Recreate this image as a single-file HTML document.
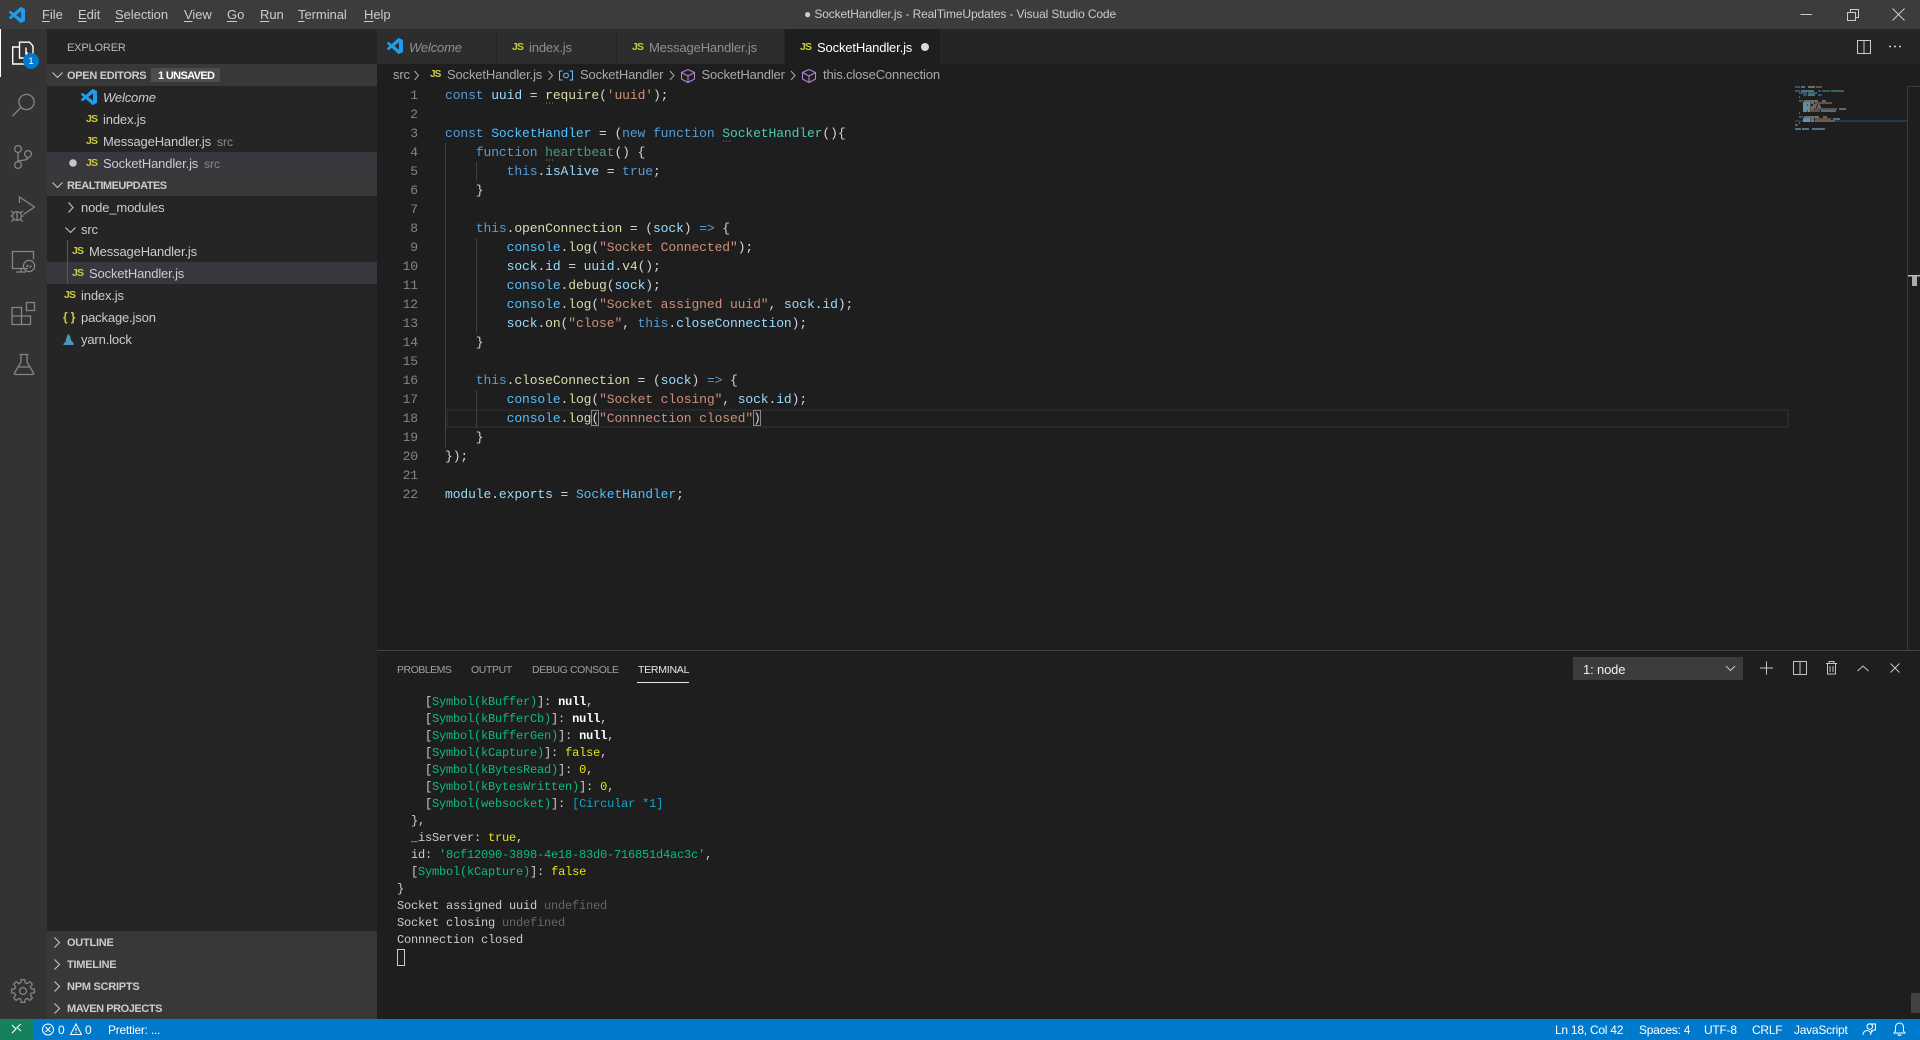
<!DOCTYPE html>
<html><head><meta charset="utf-8"><title>SocketHandler.js - RealTimeUpdates - Visual Studio Code</title>
<style>
html,body{margin:0;padding:0;background:#1e1e1e;width:1920px;height:1040px;overflow:hidden}
body{position:relative;font-family:"Liberation Sans",sans-serif;font-size:13px;color:#ccc}
.b{position:absolute}
.t{position:absolute;white-space:pre;height:22px;line-height:22px;margin-top:1px;letter-spacing:-.15px}
.j{position:absolute;white-space:pre;font:bold 10.5px/22px "Liberation Sans",sans-serif;letter-spacing:-.9px;color:#cbcb41;height:22px;margin-top:1px}
.m{position:absolute;white-space:pre;height:29px;line-height:29px;color:#ccc;letter-spacing:-.05px}
.h{position:absolute;white-space:pre;height:22px;line-height:22px;font-size:11px;font-weight:bold;color:#ccc;letter-spacing:-.25px;margin-top:1px}
.d{position:absolute;white-space:pre;height:22px;line-height:22px;margin-top:1px;color:#8b8b8b;font-size:12px}
.c{position:absolute;left:445px;height:19px;white-space:pre;font:13px/19px "Liberation Mono",monospace;letter-spacing:-.1px;color:#d4d4d4}
.n{position:absolute;left:380px;width:38px;text-align:right;height:19px;font:13px/19px "Liberation Mono",monospace;letter-spacing:-.1px;color:#858585}
.k{color:#569cd6}.v{color:#9cdcfe}.f{color:#dcdcaa}.s{color:#ce9178}.l{color:#4ec9b0}.u{color:#4f9a7c}.q{color:#4fc1ff}
.r{position:absolute;left:397px;height:17px;white-space:pre;font:12px/17px "Liberation Mono",monospace;letter-spacing:-.2px;color:#ccc;margin-top:1px}
.g{color:#0dbc79}.y{color:#e5e510}.w{color:#fff;font-weight:bold}.a{color:#11a8cd}.x{color:#666}
.p{position:absolute;white-space:pre;font-size:10.5px;height:18px;line-height:18px;color:#a0a0a0;top:661px}
.o{position:absolute;white-space:pre;font-size:12px;height:21px;line-height:21px;top:1020px;color:#fff;letter-spacing:-.25px}
svg{position:absolute;overflow:visible}
u{text-decoration:underline;text-underline-offset:2px}
</style></head><body>

<!-- regions -->
<div class="b" style="left:0;top:0;width:1920px;height:29px;background:#3c3c3c"></div>
<div class="b" style="left:0;top:29px;width:47px;height:990px;background:#333"></div>
<div class="b" style="left:0;top:29px;width:1px;height:48px;background:#fff"></div>
<div class="b" style="left:47px;top:29px;width:330px;height:990px;background:#252526"></div>
<div class="b" style="left:47px;top:64px;width:330px;height:22px;background:#383838"></div>
<div class="b" style="left:47px;top:152px;width:330px;height:22px;background:#37373d"></div>
<div class="b" style="left:47px;top:174px;width:330px;height:22px;background:#383838"></div>
<div class="b" style="left:47px;top:262px;width:330px;height:22px;background:#37373d"></div>
<div class="b" style="left:67px;top:240px;width:1px;height:44px;background:#585858"></div>
<div class="b" style="left:47px;top:931px;width:330px;height:88px;background:#383838"></div>
<div class="b" style="left:377px;top:29px;width:1543px;height:35px;background:#252526"></div>
<div class="b" style="left:377px;top:29px;width:119px;height:35px;background:#2d2d2d"></div>
<div class="b" style="left:497px;top:29px;width:119px;height:35px;background:#2d2d2d"></div>
<div class="b" style="left:617px;top:29px;width:167px;height:35px;background:#2d2d2d"></div>
<div class="b" style="left:785px;top:29px;width:155px;height:35px;background:#1e1e1e"></div>
<div class="b" style="left:377px;top:64px;width:1543px;height:22px;background:#1e1e1e"></div>
<div class="b" style="left:377px;top:650px;width:1543px;height:1px;background:#444"></div>
<div class="b" style="left:0;top:1019px;width:1920px;height:21px;background:#007acc"></div>
<div class="b" style="left:0;top:1019px;width:33px;height:21px;background:#16825d"></div>

<!-- title bar -->
<svg style="left:9px;top:7px" width="16" height="16" viewBox="0 0 24 24"><path fill="#1f9cf0" d="M23.15 2.587L18.21.21a1.494 1.494 0 0 0-1.705.29l-9.46 8.63-4.12-3.128a.999.999 0 0 0-1.276.057L.327 7.261A1 1 0 0 0 .326 8.74L3.899 12 .326 15.26a1 1 0 0 0 .001 1.479L1.65 17.94a.999.999 0 0 0 1.276.057l4.12-3.128 9.46 8.63a1.492 1.492 0 0 0 1.704.29l4.942-2.377A1.5 1.5 0 0 0 24 20.06V3.939a1.5 1.5 0 0 0-.85-1.352zm-5.146 14.861L10.826 12l7.178-5.448v10.896z"/></svg>
<div class="m" style="left:42px;top:0"><u>F</u>ile</div>
<div class="m" style="left:78px;top:0"><u>E</u>dit</div>
<div class="m" style="left:115px;top:0"><u>S</u>election</div>
<div class="m" style="left:184px;top:0"><u>V</u>iew</div>
<div class="m" style="left:227px;top:0"><u>G</u>o</div>
<div class="m" style="left:260px;top:0"><u>R</u>un</div>
<div class="m" style="left:298px;top:0"><u>T</u>erminal</div>
<div class="m" style="left:364px;top:0"><u>H</u>elp</div>
<div class="m" style="left:804px;top:0;font-size:12px;letter-spacing:-.13px">● SocketHandler.js - RealTimeUpdates - Visual Studio Code</div>
<svg style="left:0;top:0" width="1920" height="29" fill="none" stroke="#ccc"><path d="M1800.5 14.5h11.5"/><path d="M1847.5 12.5h8v8h-8zM1850.5 12.5v-3h8v8h-3"/><path d="M1892.5 8.5l12 12M1904.5 8.5l-12 12"/></svg>

<!-- activity bar -->
<svg style="left:0;top:0" width="47" height="1019" fill="none" stroke="#858585" stroke-width="1.3">
 <g stroke="#fff" stroke-width="1.4"><path d="M19.5 47V42.2H29.5L33 46V58H27"/><path d="M19.5 47H12.7V64H26V47.5"/><path d="M19.5 47V58H27V52"/></g>
 <circle cx="31" cy="61" r="8" fill="#007acc" stroke="none"/>
 <circle cx="26.5" cy="102" r="7.6"/><path d="M21 107.5l-8.5 8.5"/>
 <circle cx="18" cy="149" r="3.4"/><circle cx="18" cy="165" r="3.4"/><circle cx="28" cy="154" r="3.4"/><path d="M18 152.5v9M28 157.5c0 4-10 2-10 4"/>
 <path d="M19.5 203v-6l15 10-11 7.5"/><circle cx="17" cy="216" r="4.4"/><path d="M11 211l3 2M23 211l-3 2M10.5 216h2M21.5 216h2M11 221.5l3-2M23 221.5l-3-2M17 212v8"/>
 <path d="M28 268.5H12.5v-17h21v8M16 272h10M21 268.5v3"/><circle cx="29" cy="266" r="5.6"/><path d="M26.5 267l2-2M29.5 267.500l2-2"/>
 <path d="M12 307.5h9.500v17H12zM12 316h18.500v8.500H21M26.500 302.500h8v8h-8z"/>
 <path d="M19.5 354.5h9M21 354.5v7.5l-6.5 11a1 1 0 0 0 1 1.5h17a1 1 0 0 0 1-1.5L27 362v-7.5M18.5 367h11"/>
 <g transform="translate(23 991)"><path id="gt" d="M-2.2-8.2L-1.8-11.4H1.8L2.2-8.2L4.25-7.36"/><use href="#gt" transform="rotate(45)"/><use href="#gt" transform="rotate(90)"/><use href="#gt" transform="rotate(135)"/><use href="#gt" transform="rotate(180)"/><use href="#gt" transform="rotate(225)"/><use href="#gt" transform="rotate(270)"/><use href="#gt" transform="rotate(315)"/><circle r="3.4"/></g>
</svg>
<div class="t" style="left:23px;top:50px;width:16px;text-align:center;font-size:9.5px;color:#fff">1</div>

<!-- sidebar -->
<div class="t" style="left:67px;top:36px;font-size:11px;color:#bbb">EXPLORER</div>
<svg style="left:47px;top:0" width="330" height="1019" fill="none" stroke="#c5c5c5" stroke-width="1.1">
 <path d="M5.5 72.5l5 5 5-5M5.5 182.5l5 5 5-5"/>
 <path d="M21.5 202.5l4.5 5-4.5 5"/>
 <path d="M18.5 227.5l5 5 5-5"/>
 <path d="M7.5 937.5l5 5-5 5M7.5 959.5l5 5-5 5M7.5 981.5l5 5-5 5M7.5 1003.5l5 5-5 5"/>
 <circle cx="26" cy="163" r="3.8" fill="#c5c5c5" stroke="none" />
</svg>
<div class="h" style="left:67px;top:64px;letter-spacing:-.3px">OPEN EDITORS</div>
<div class="b" style="left:151px;top:68px;width:69px;height:14px;background:#4d4d4d"></div>
<div class="h" style="left:158px;top:64px;color:#fff;letter-spacing:-.65px">1 UNSAVED</div>
<svg style="left:81px;top:89px" width="16" height="16" viewBox="0 0 24 24"><path fill="#1f9cf0" d="M23.15 2.587L18.21.21a1.494 1.494 0 0 0-1.705.29l-9.46 8.63-4.12-3.128a.999.999 0 0 0-1.276.057L.327 7.261A1 1 0 0 0 .326 8.74L3.899 12 .326 15.26a1 1 0 0 0 .001 1.479L1.65 17.94a.999.999 0 0 0 1.276.057l4.12-3.128 9.46 8.63a1.492 1.492 0 0 0 1.704.29l4.942-2.377A1.5 1.5 0 0 0 24 20.06V3.939a1.5 1.5 0 0 0-.85-1.352zm-5.146 14.861L10.826 12l7.178-5.448v10.896z"/></svg>
<div class="t" style="left:103px;top:86px;font-style:italic">Welcome</div>
<div class="j" style="left:86px;top:107px">JS</div><div class="t" style="left:103px;top:108px">index.js</div>
<div class="j" style="left:86px;top:129px">JS</div><div class="t" style="left:103px;top:130px">MessageHandler.js</div><div class="d" style="left:217px;top:130px">src</div>
<div class="j" style="left:86px;top:151px">JS</div><div class="t" style="left:103px;top:152px">SocketHandler.js</div><div class="d" style="left:204px;top:152px">src</div>
<div class="h" style="left:67px;top:174px;letter-spacing:-.5px">REALTIMEUPDATES</div>
<div class="t" style="left:81px;top:196px">node_modules</div>
<div class="t" style="left:81px;top:218px">src</div>
<div class="j" style="left:72px;top:239px">JS</div><div class="t" style="left:89px;top:240px">MessageHandler.js</div>
<div class="j" style="left:72px;top:261px">JS</div><div class="t" style="left:89px;top:262px">SocketHandler.js</div>
<div class="j" style="left:64px;top:283px">JS</div><div class="t" style="left:81px;top:284px">index.js</div>
<div class="t" style="left:63px;top:305px;font-weight:bold;font-size:12px;color:#cbcb41">{ }</div><div class="t" style="left:81px;top:306px">package.json</div>
<svg style="left:63px;top:333px" width="12" height="13" viewBox="0 0 12 13"><path fill="#4a96bd" d="M5 1l2 2 1 4 2.5 3V12H.5V10.5C2 10 3 8 3 6z"/></svg><div class="t" style="left:81px;top:328px">yarn.lock</div>
<div class="h" style="left:67px;top:931px">OUTLINE</div>
<div class="h" style="left:67px;top:953px">TIMELINE</div>
<div class="h" style="left:67px;top:975px">NPM SCRIPTS</div>
<div class="h" style="left:67px;top:997px;letter-spacing:-.45px">MAVEN PROJECTS</div>

<!-- tabs -->
<svg style="left:387px;top:38px" width="16" height="16" viewBox="0 0 24 24"><path fill="#1f9cf0" d="M23.15 2.587L18.21.21a1.494 1.494 0 0 0-1.705.29l-9.46 8.63-4.12-3.128a.999.999 0 0 0-1.276.057L.327 7.261A1 1 0 0 0 .326 8.74L3.899 12 .326 15.26a1 1 0 0 0 .001 1.479L1.65 17.94a.999.999 0 0 0 1.276.057l4.12-3.128 9.46 8.63a1.492 1.492 0 0 0 1.704.29l4.942-2.377A1.5 1.5 0 0 0 24 20.06V3.939a1.5 1.5 0 0 0-.85-1.352zm-5.146 14.861L10.826 12l7.178-5.448v10.896z"/></svg>
<div class="t" style="left:409px;top:36px;font-style:italic;color:#8f8f8f">Welcome</div>
<div class="j" style="left:512px;top:35px">JS</div><div class="t" style="left:529px;top:36px;color:#8f8f8f">index.js</div>
<div class="j" style="left:632px;top:35px">JS</div><div class="t" style="left:649px;top:36px;color:#8f8f8f">MessageHandler.js</div>
<div class="j" style="left:800px;top:35px">JS</div><div class="t" style="left:817px;top:36px;color:#fff">SocketHandler.js</div>
<div class="b" style="left:921px;top:43px;width:8px;height:8px;border-radius:50%;background:#d8d8d8"></div>
<svg style="left:0;top:0" width="1920" height="64" fill="none" stroke="#ccc"><path d="M1857.5 40.5h13v13h-13zM1864 40.5v13"/><path d="M1889 46.5h2M1894 46.5h2M1899 46.5h2" stroke-width="1.4"/></svg>

<!-- breadcrumb -->
<div class="t" style="left:393px;top:63px;color:#a9a9a9">src</div>
<div class="j" style="left:430px;top:63px;font-size:10px">JS</div>
<div class="t" style="left:447px;top:63px;color:#a9a9a9">SocketHandler.js</div>
<div class="t" style="left:580px;top:63px;color:#a9a9a9">SocketHandler</div>
<div class="t" style="left:701.5px;top:63px;color:#a9a9a9">SocketHandler</div>
<div class="t" style="left:823px;top:63px;color:#a9a9a9">this.closeConnection</div>
<svg style="left:0;top:0" width="1000" height="86" fill="none" stroke="#a9a9a9">
 <path d="M414.5 71l4 4.5-4 4.5M548.5 71l4 4.5-4 4.5M670 71l4 4.5-4 4.500M791 71l4 4.5-4 4.500"/>
 <g stroke="#75beff"><path d="M562.5 71h-3v9h3M569.500 71h3v9h-3"/><circle cx="566" cy="75.5" r="2.4"/></g>
 <g stroke="#b180d7" stroke-width="1.1"><path d="M688 69.5l6.500 3v6.500l-6.500 3.500-6.500-3.500V72.500zM681.500 72.500l6.500 3.500 6.500-3.500M688 76v6.500"/><path d="M809 69.500l6.500 3v6.500l-6.500 3.500-6.500-3.500V72.500zM802.500 72.500l6.500 3.500 6.500-3.500M809 76v6.500"/></g>
</svg>

<!-- editor -->
<div class="b" style="left:446px;top:409px;width:1339px;height:15px;border:2px solid #282828"></div>
<div class="b" style="left:445px;top:143px;width:1px;height:304px;background:#404040"></div>
<div class="b" style="left:476px;top:162px;width:1px;height:19px;background:#404040"></div>
<div class="b" style="left:476px;top:238px;width:1px;height:95px;background:#404040"></div>
<div class="b" style="left:476px;top:390px;width:1px;height:38px;background:#404040"></div>

<div class="n" style="top:86px">1</div><div class="c" style="top:86px"><span class="k">const</span> <span class="v">uuid</span> = <span class="f">require</span>(<span class="s">'uuid'</span>);</div>
<div class="n" style="top:105px">2</div>
<div class="n" style="top:124px">3</div><div class="c" style="top:124px"><span class="k">const</span> <span class="q">SocketHandler</span> = (<span class="k">new</span> <span class="k">function</span> <span class="l">SocketHandler</span>(){</div>
<div class="n" style="top:143px">4</div><div class="c" style="top:143px">    <span class="k">function</span> <span class="u">heartbeat</span>() {</div>
<div class="n" style="top:162px">5</div><div class="c" style="top:162px">        <span class="k">this</span>.<span class="v">isAlive</span> = <span class="k">true</span>;</div>
<div class="n" style="top:181px">6</div><div class="c" style="top:181px">    }</div>
<div class="n" style="top:200px">7</div>
<div class="n" style="top:219px">8</div><div class="c" style="top:219px">    <span class="k">this</span>.<span class="f">openConnection</span> = (<span class="v">sock</span>) <span class="k">=&gt;</span> {</div>
<div class="n" style="top:238px">9</div><div class="c" style="top:238px">        <span class="q">console</span>.<span class="f">log</span>(<span class="s">"Socket Connected"</span>);</div>
<div class="n" style="top:257px">10</div><div class="c" style="top:257px">        <span class="v">sock</span>.<span class="v">id</span> = <span class="v">uuid</span>.<span class="f">v4</span>();</div>
<div class="n" style="top:276px">11</div><div class="c" style="top:276px">        <span class="q">console</span>.<span class="f">debug</span>(<span class="v">sock</span>);</div>
<div class="n" style="top:295px">12</div><div class="c" style="top:295px">        <span class="q">console</span>.<span class="f">log</span>(<span class="s">"Socket assigned uuid"</span>, <span class="v">sock</span>.<span class="v">id</span>);</div>
<div class="n" style="top:314px">13</div><div class="c" style="top:314px">        <span class="v">sock</span>.<span class="f">on</span>(<span class="s">"close"</span>, <span class="k">this</span>.<span class="v">closeConnection</span>);</div>
<div class="n" style="top:333px">14</div><div class="c" style="top:333px">    }</div>
<div class="n" style="top:352px">15</div>
<div class="n" style="top:371px">16</div><div class="c" style="top:371px">    <span class="k">this</span>.<span class="f">closeConnection</span> = (<span class="v">sock</span>) <span class="k">=&gt;</span> {</div>
<div class="n" style="top:390px">17</div><div class="c" style="top:390px">        <span class="q">console</span>.<span class="f">log</span>(<span class="s">"Socket closing"</span>, <span class="v">sock</span>.<span class="v">id</span>);</div>
<div class="n" style="top:409px">18</div><div class="c" style="top:409px">        <span class="q">console</span>.<span class="f">log</span>(<span class="s">"Connnection closed"</span>)</div>
<div class="n" style="top:428px">19</div><div class="c" style="top:428px">    }</div>
<div class="n" style="top:447px">20</div><div class="c" style="top:447px">});</div>
<div class="n" style="top:466px">21</div>
<div class="n" style="top:485px">22</div><div class="c" style="top:485px"><span class="v">module</span>.<span class="v">exports</span> = <span class="q">SocketHandler</span>;</div>

<svg style="left:0;top:0" width="1920" height="650" fill="none">
 <!-- hint dots -->
 <path stroke="#8a8a8a" d="M546 103h1M549 103h1M552 103h1M723 141h1M726 141h1M729 141h1M546 160h1M549 160h1M552 160h1"/>
 <!-- bracket match -->
 <path stroke="#888" d="M591.5 410.5h7v15h-7zM753.5 410.5h7v15h-7z"/>
 <!-- minimap -->
 <rect x="1795" y="120" width="112" height="2" fill="#1d3a56"/>
 <rect x="1803" y="102" width="8" height="10" fill="#6d8ba3" opacity=".45"/>
 <rect x="1803" y="118" width="8" height="4" fill="#6d8ba3" opacity=".45"/>
 <g transform="translate(1795 87)" stroke-width="2" opacity=".42">
  <path stroke="#569cd6" d="M0 0h5M0 4h5M23 4h3M27 4h8M4 6h8M8 8h4M23 8h4M4 14h4M21 24h4M4 30h4"/>
  <path stroke="#9cdcfe" d="M6 0h4M6 4h13M13 8h7M27 14h4M8 16h7M8 18h4M13 18h2M18 18h4M8 20h7M22 20h4M8 22h7M44 22h7M8 24h4M26 24h15M28 30h4M8 32h7M38 32h7M8 34h7M0 42h6M7 42h7M17 42h13"/>
  <path stroke="#dcdcaa" d="M13 0h7M9 14h14M16 16h3M23 18h2M16 20h5M16 22h3M13 24h2M9 30h15M16 32h3M16 34h3"/>
  <path stroke="#ce9178" d="M21 0h6M20 16h17M20 22h22M16 24h7M20 32h16M20 34h20"/>
  <path stroke="#4ec9b0" d="M36 4h13M13 6h9"/>
  <path stroke="#bbb" d="M4 10h1M4 26h1M4 36h1M0 38h3"/>
 </g>
 <!-- overview ruler -->
 <path stroke="#3a3a3a" d="M1907.5 86v564M1907.5 86.5h13"/>
 <rect x="1908" y="275" width="12" height="1.5" fill="#bbb"/>
 <rect x="1912" y="276" width="5" height="10" fill="#aaa"/>
</svg>

<!-- panel -->
<div class="p" style="left:397px;letter-spacing:-.5px">PROBLEMS</div>
<div class="p" style="left:471px;letter-spacing:-.37px">OUTPUT</div>
<div class="p" style="left:532px;letter-spacing:-.38px">DEBUG CONSOLE</div>
<div class="p" style="left:638px;color:#e7e7e7;letter-spacing:-.24px">TERMINAL</div>
<div class="b" style="left:637px;top:682px;width:52px;height:1px;background:#e7e7e7"></div>
<div class="b" style="left:1573px;top:657px;width:170px;height:23px;background:#3c3c3c"></div>
<div class="t" style="left:1583px;top:658px;color:#f0f0f0">1: node</div>
<svg style="left:0;top:640px" width="1920" height="60" fill="none" stroke="#c5c5c5">
 <path d="M1726 26l4.5 4.5 4.5-4.5"/>
 <path d="M1766.5 21.5v13M1760 28h13"/>
 <path d="M1793.5 21.5h13v13h-13zM1800 21.5v13"/>
 <path d="M1826 23.5h11M1829 23.5v-2h5v2M1827.5 23.5v10.5h8v-10.5M1830 26v6M1833 26v6"/>
 <path d="M1857.5 31l5.5-5 5.5 5"/>
 <path d="M1890.5 23.5l9 9M1899.5 23.5l-9 9"/>
</svg>
<div class="r" style="top:693px">    [<span class="g">Symbol(kBuffer)</span>]: <span class="w">null</span>,</div>
<div class="r" style="top:710px">    [<span class="g">Symbol(kBufferCb)</span>]: <span class="w">null</span>,</div>
<div class="r" style="top:727px">    [<span class="g">Symbol(kBufferGen)</span>]: <span class="w">null</span>,</div>
<div class="r" style="top:744px">    [<span class="g">Symbol(kCapture)</span>]: <span class="y">false</span>,</div>
<div class="r" style="top:761px">    [<span class="g">Symbol(kBytesRead)</span>]: <span class="y">0</span>,</div>
<div class="r" style="top:778px">    [<span class="g">Symbol(kBytesWritten)</span>]: <span class="y">0</span>,</div>
<div class="r" style="top:795px">    [<span class="g">Symbol(websocket)</span>]: <span class="a">[Circular *1]</span></div>
<div class="r" style="top:812px">  },</div>
<div class="r" style="top:829px">  _isServer: <span class="y">true</span>,</div>
<div class="r" style="top:846px">  id: <span class="g">'8cf12090-3898-4e18-83d0-716851d4ac3c'</span>,</div>
<div class="r" style="top:863px">  [<span class="g">Symbol(kCapture)</span>]: <span class="y">false</span></div>
<div class="r" style="top:880px">}</div>
<div class="r" style="top:897px">Socket assigned uuid <span class="x">undefined</span></div>
<div class="r" style="top:914px">Socket closing <span class="x">undefined</span></div>
<div class="r" style="top:931px">Connnection closed</div>
<div class="b" style="left:397px;top:949px;width:6px;height:15px;border:1px solid #ccc"></div>
<div class="b" style="left:1911px;top:993px;width:9px;height:20px;background:#424242"></div>

<!-- status bar -->
<svg style="left:0;top:1019px" width="1920" height="21" fill="none" stroke="#fff">
 <path d="M12 6l4 4-4 4M21 5l-4 3.5 4 3.5" stroke-width="1.1"/>
 <circle cx="48" cy="10.5" r="5.5"/><path d="M45.5 8l5 5M50.5 8l-5 5"/>
 <path d="M76 5l5.5 10.5h-11zM76 9v3M76 13v1"/>
 <path d="M1867 7.5a2.8 2.8 0 1 1 0 .1M1863 16c0-3 2-4.5 4-4.5s4 1.500 4 4.500M1868 5h7.500v6h-2l-2 2v-2" stroke-width="1"/>
 <path d="M1899.500 4a4 4 0 0 0-4 4v4l-1.500 2h11l-1.500-2V8a4 4 0 0 0-4-4zM1898 15a1.500 1.500 0 0 0 3 0"/>
</svg>
<div class="o" style="left:58px">0</div>
<div class="o" style="left:85px">0</div>
<div class="o" style="left:108px">Prettier: ...</div>
<div class="o" style="left:1555px">Ln 18, Col 42</div>
<div class="o" style="left:1639px">Spaces: 4</div>
<div class="o" style="left:1704px">UTF-8</div>
<div class="o" style="left:1752px">CRLF</div>
<div class="o" style="left:1794px">JavaScript</div>
</body></html>
